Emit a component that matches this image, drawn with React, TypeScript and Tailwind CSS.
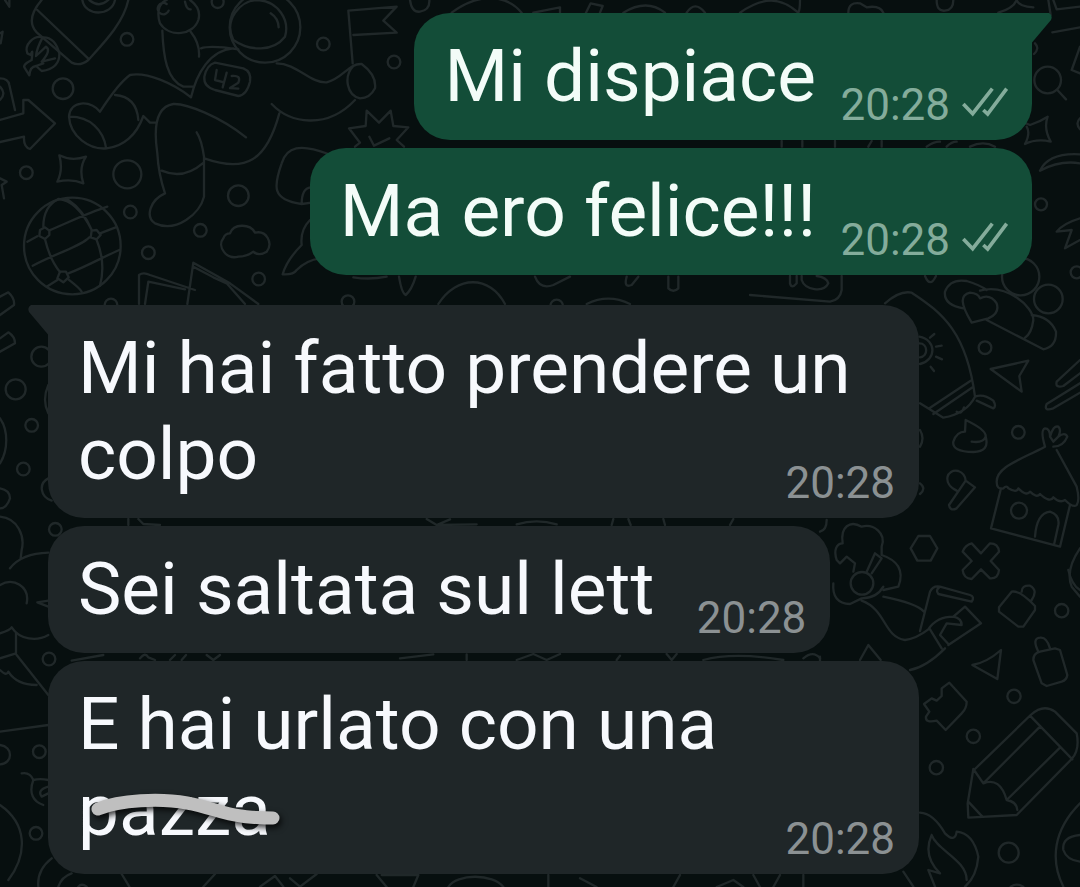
import type { ReactNode } from 'react';
import clsx from 'clsx';

type Message = {
  id: number;
  body: ReactNode;
  time: string;
  mine?: boolean;
  tail?: boolean;
};

const sent: Message[] = [
  { id: 1, body: 'Mi dispiace', time: '20:28', mine: true, tail: true },
  { id: 2, body: 'Ma ero felice!!!', time: '20:28', mine: true },
];

const received: Message[] = [
  { id: 3, body: 'Mi hai fatto prendere un colpo', time: '20:28', tail: true },
  { id: 4, body: 'Sei saltata sul lett', time: '20:28' },
  {
    id: 5,
    body: (
      <>
        E hai urlato con una <Scribbled>pazza</Scribbled>
      </>
    ),
    time: '20:28',
  },
];

export default function App() {
  return (
    <main className="relative min-h-screen overflow-hidden bg-[#070f0f] px-12 py-[13px] font-['Roboto',sans-serif]">
      <Wallpaper />
      <div className="relative flex flex-col gap-[30px]">
        <MessageGroup messages={sent} />
        <MessageGroup messages={received} />
      </div>
    </main>
  );
}

function MessageGroup({ messages }: { messages: Message[] }) {
  return (
    <section className="flex flex-col gap-2">
      {messages.map((m) => (
        <Bubble key={m.id} message={m} />
      ))}
    </section>
  );
}

function Bubble({ message }: { message: Message }) {
  const { body, time, mine, tail } = message;
  return (
    <article
      className={clsx(
        'relative grid max-w-[871px] rounded-[36px] pl-[30px] pr-6',
        mine ? 'self-end bg-[#134d38] text-[#f3fcf8]' : 'self-start bg-[#1f2628] text-[#f7f9fd]',
        tail && (mine ? 'rounded-tr-none' : 'rounded-tl-none'),
      )}
    >
      {tail && <Tail mine={mine} />}
      <p className="col-start-1 row-start-1 pt-5 pb-[21px] text-[73px] leading-[86px]">
        {body}
        {/* keeps the last line clear of the time */}
        <span aria-hidden="true" className={clsx('inline-block', mine ? 'w-[192px]' : 'w-[152px]')} />
      </p>
      <div
        className={clsx(
          'col-start-1 row-start-1 mb-[9px] flex items-center gap-3 self-end justify-self-end',
          mine ? 'text-[#84ac9b]' : 'text-[#8b9193]',
        )}
      >
        <time className="text-[44px] leading-[52px]">{time}</time>
        {mine && <Ticks />}
      </div>
    </article>
  );
}

function Tail({ mine }: { mine?: boolean }) {
  return (
    <svg
      aria-hidden="true"
      viewBox="0 0 20 32"
      className={clsx('absolute top-0 h-8 w-5', mine ? 'left-full fill-[#134d38]' : 'right-full -scale-x-100 fill-[#1f2628]')}
    >
      <path d="M-1 0H17Q21 2 19 7L0 29.500H-1Z" />
    </svg>
  );
}

function Ticks() {
  return (
    <svg
      role="img"
      aria-label="Delivered"
      viewBox="545 261 138 90"
      className="mb-1.5 h-[30px] w-[46px]"
      fill="none"
      stroke="currentColor"
      strokeWidth="11"
    >
      <path d="M549 312 577 341 636 266" />
      <path d="M609 330 622 342 679 266" />
    </svg>
  );
}

function Scribbled({ children }: { children: ReactNode }) {
  return (
    <span className="relative inline-block">
      {children}
      <svg
        aria-hidden="true"
        viewBox="0 0 210 86"
        className="absolute top-0 left-0 h-[86px] w-[210px] max-w-none drop-shadow-[2px_3px_3px_rgba(0,0,0,0.8)]"
        fill="none"
        stroke="#bfbfbf"
        strokeWidth="13"
        strokeLinecap="round"
      >
        <path d="M20 42C42 33 82 31 109 36C132 40 144 47 163 49Q176 51 195 51" />
      </svg>
    </span>
  );
}

function Wallpaper() {
  return (
    <svg
      aria-hidden="true"
      viewBox="0 0 3240 2661"
      preserveAspectRatio="xMinYMin slice"
      className="absolute inset-0 h-full w-full"
      fill="none"
      stroke="#202829"
      strokeWidth="7"
      strokeLinecap="round"
      strokeLinejoin="round"
    >
      {/* rocket */}
      <path d="M125 0C95 35 85 70 110 97L215 188Q240 200 265 180C310 130 370 70 385 0M112 30 265 176M247 0C255 50 335 50 345 0M268 0Q297 25 325 0" />
      <path d="M128 112C100 105 72 135 82 160L92 165Q100 140 95 180Q65 195 75 205L88 226Q90 200 108 198L125 213Q180 205 178 160Q165 110 128 112ZM128 112Q110 145 108 168L138 140Q155 150 125 185L165 175M108 198 130 190" />
      {/* astronaut */}
      <circle cx="795" cy="82" r="106" />
      <path d="M700 120C670 60 720 0 775 0C835 5 870 60 855 110C820 155 750 155 700 120ZM812 40Q835 55 836 82M570 0Q605 25 595 60C580 105 510 115 480 70C470 40 475 10 500 0M555 5Q560 30 572 28M500 12A17 17 0 1 0 506 32M487 92C490 170 500 240 550 260H580M572 95Q600 130 597 170M603 145Q630 135 715 148M700 145C630 150 590 220 573 292M573 292C520 250 440 215 390 225Q355 250 300 335C270 300 210 300 207 350C210 410 270 450 320 445C370 440 410 405 430 348L450 368H468M345 285Q410 290 415 360M210 350C270 350 310 390 318 443M738 412C660 350 560 310 520 312C470 320 460 380 472 460Q475 520 495 580C450 600 435 650 465 670C530 700 600 640 612 590V470Q605 420 590 397M485 512Q550 540 608 490M613 475C740 520 800 480 838 340M815 312C870 370 980 390 1065 300M830 190C890 190 930 250 980 247C1030 235 1045 190 1085 192Q1130 225 1125 265Q1110 295 1080 295C1040 285 1030 230 1060 198M1058 190 1045 32 1190 20 1150 62 1190 98 1060 105" />
      <path d="M645 188 730 205Q755 215 750 245Q740 285 715 288L645 270Q610 260 613 230Q620 195 645 188ZM650 210 645 240 672 247M680 218 668 262M695 228Q725 225 715 248L690 264 715 266" />
      {/* arrow, star, globe */}
      <path d="M0 360 70 340V300H85L165 370 90 447Q70 440 72 410L0 426M0 235Q25 235 28 255L45 330M0 260Q20 280 0 300M178 466Q215 485 258 470Q235 505 250 550Q215 535 172 545Q190 510 178 466ZM0 535 20 545 5 555 12 595M0 100 8 95 2 130M15 0 28 20V0" />
      <circle cx="217" cy="738" r="145" />
      <path d="M82 725 112 709M148 691C200 670 260 640 322 620M300 700 347 682M140 860 172 840M205 820C260 800 310 770 358 750M130 680Q130 620 175 597Q230 600 275 690M135 718Q150 780 180 816M290 720C310 770 310 820 300 857M205 838Q240 865 245 875M98 797C190 750 240 740 268 712M175 597 205 600Q250 630 275 690" />
      <path d="M120 690 135 682 148 692V705L135 717 118 708ZM275 692 290 690 302 705 290 718 272 712ZM180 815H198L206 832 190 847 172 835Z" />
      {/* cloud, paper, sofa */}
      <path d="M690 700C700 670 750 670 765 698C800 690 820 730 800 755Q775 770 760 755Q740 770 715 770C680 780 650 740 670 715Q675 700 690 700ZM417 912V825Q430 815 450 825L585 870M435 912 445 845 555 868M562 912 580 788 690 850 775 912M580 800 640 832 680 850 735 912M985 462C900 430 860 440 845 490C820 560 815 600 905 612L935 608M905 612Q905 565 932 562M930 660Q900 690 905 735Q860 780 848 823Q880 825 890 810Q920 780 960 775" />
      {/* sparkle burst */}
      <path d="M1065 440 1080 428 1047 385 1097 378 1100 332 1137 368 1172 332 1180 378 1225 382 1190 420 1212 440M1108 410 1122 437 1168 415" />
      <path d="M1230 0Q1235 38 1260 35Q1290 30 1288 0M1355 38C1440-25 1520-15 1565 38M1600 38 1680 22V38M1758 38 1772 10 1808 18 1800 38M1870 38Q1940-5 1995 38M2060 38Q2085 0 2115 38M2220 38C2290-10 2340-10 2395 38Q2400 30 2400 0" />

      {/* top right corner */}
      <g transform="translate(2340 0)">
        <path d="M205 38Q205 5 240 10L260 22Q300 15 310 38M470 0Q470 35 495 32Q520 30 520 0M655 38Q700 25 710 0Q715 20 760 22M805 0 812 45M820 0 830 28 900 20M817 97 900 82M900 140 875 210 900 220M765 130Q780 145 762 162" />
        <circle cx="803" cy="240" r="40" />
        <path d="M832 270 858 298M725 365 750 375Q780 365 803 350 790 385 812 425 770 415 735 432 752 400 740 380M780 512Q840 480 900 490M780 512C800 470 850 460 900 463M900 655Q850 670 830 695L875 690 855 745 900 720M900 355Q885 370 900 388" />
        <circle cx="783" cy="613" r="18" />
        <circle cx="890" cy="817" r="18" />
        <circle cx="722" cy="830" r="56" />
        <circle cx="805" cy="897" r="43" />
        <path d="M5 423V440M67 423V440M165 423V440M265 440 275 423M305 423V440M440 440Q460 425 480 425M500 440Q515 425 530 425M570 440Q610 420 645 440M30 828V850Q35 868 50 850V828M65 828V840C75 870 130 880 145 850Q140 832 110 828M185 828V870Q180 900 150 905L-90 885M435 828Q450 865 468 828" />
      </g>

      {/* hot air balloon to hut */}
      <g transform="translate(2460 810)">
        <path d="M195 100Q240 60 275 68C370 130 440 190 465 380Q440 430 370 443L300 400M328 415 452 332M340 432 460 350M465 380Q490 370 520 392Q530 410 520 415L470 392M410 425Q425 435 432 412M330 203 343 192M348 230 365 227M348 260 366 268M332 290 342 303M298 220C325 220 325 260 300 262M298 200C350 210 350 270 300 282" />
        <path d="M430 115Q370 105 375 65Q390 25 440 33 480 45 500 60M480 62C560 40 640 110 640 150Q635 190 615 203M500 150 670 238Q710 230 708 185Q690 140 635 135M455 158C420 100 420 75 450 68Q475 70 480 85Q510 70 530 100Q540 130 505 145Z" />
        <path d="M512 297 625 272 598 318 605 365ZM780 270 710 335Q705 355 730 348L780 310M780 340 680 402Q670 425 700 415L780 368M437 450Q500 480 497 500 510 545 460 546 395 545 400 515 410 485 435 485ZM497 500Q490 520 455 515M410 662C365 640 380 595 415 603Q435 610 437 632L465 652 410 715Q390 725 387 705L437 632" />
        <path d="M675 530C600 570 530 590 530 635Q530 660 550 655Q560 645 565 655Q590 670 595 655Q620 680 630 665Q650 685 660 672Q690 700 700 682Q720 700 735 690Q760 715 770 705Q780 690 770 650L710 540M675 530Q660 480 675 475 690 475 690 500 700 465 715 470 725 480 715 500 735 485 742 500Q730 530 700 530M690 500 700 515 715 500M543 655 513 775 720 830 750 705M645 800Q650 730 690 725Q720 735 715 765L703 820" />
        <circle cx="597" cy="722" r="24" />
        <path d="M295 798H330L352 835 332 872H292L272 835ZM455 820 483 850 510 820Q535 820 537 845L512 873 537 900Q535 927 510 925L483 898 455 927Q430 925 428 900L455 873 428 845Q435 825 455 820ZM780 835Q735 900 755 950L780 980M300 480Q315 505 300 530M300 640Q320 655 300 672M20 750Q20 780 0 785" />
        <path d="M50 870C40 840 50 820 68 820C60 770 90 750 125 770C160 760 200 790 185 830V855C230 870 255 900 235 950L190 960M50 870 60 880 80 860 105 880 100 905M140 905 165 850 185 865 155 910" />
        <circle cx="126" cy="940" r="34" />
      </g>

      {/* hand with card, pencil, flame */}
      <g transform="translate(2460 1710)">
        <path d="M40 40Q35 100 90 102L125 85Q170 85 190 50M125 92C200 120 190 200 255 210Q290 205 325 178 350 140 400 140 425 145 425 165L380 160 360 195 385 222M190 80Q290 100 312 125M300 183 330 65Q340 45 360 50L450 75Q465 80 455 95L355 72Q345 60 360 50M330 178 365 235M400 140 435 110 483 160 385 225M270 300Q320 290 375 235M120 270 145 225 182 270M0 260V275" />
        <path d="M575 65Q600 60 645 108V120L610 170H595L537 125V112ZM605 65Q605 45 630 47Q655 60 635 90M660 245 705 235 720 240 742 315Q740 330 725 335L680 348 665 340 640 270Q640 250 660 245ZM655 245Q635 205 660 203 680 200 690 235M457 285Q500 278 543 240L532 327ZM365 378V355L388 338 440 395Q440 415 425 430L377 480 350 452Q315 460 318 440L328 425 312 402 335 385 350 392Z" />
        <path d="M465 597 632 435Q670 400 705 425L770 490Q780 540 755 567L590 735 445 743 443 700 460 597 490 640 660 470M630 437 757 568M490 640Q540 620 560 690L720 533M560 690Q590 695 592 720M447 697 487 740" />
        <path d="M300 728Q340 730 375 790 405 820 410 785 460 790 475 860 470 920 435 950M335 795C350 840 440 870 440 930M335 795C310 850 340 890 360 910L325 900 345 950M250 905 280 950M780 700C700 780 690 870 730 950M780 795Q725 800 730 840 740 870 780 875M572 950Q590 938 610 950" />
        <circle cx="725" cy="122" r="20" />
        <circle cx="582" cy="379" r="20" />
        <circle cx="460" cy="499" r="20" />
        <circle cx="349" cy="593" r="20" />
        <circle cx="566" cy="848" r="30" />
        <path d="M745 0Q755 45 780 60" />
      </g>

      {/* left edge */}
      <g transform="translate(0 810)">
        <path d="M0 80 25 67Q45 85 42 105L0 135M0 205 25 187Q45 200 45 220L0 245M145 345Q125 390 145 430M0 445C25 480 25 540 0 580M0 655Q30 660 30 685 20 715 0 715M145 625C115 640 120 680 155 692M0 740C55 745 75 800 65 840L62 865M30 895Q65 850 145 848" />
        <circle cx="124" cy="260" r="30" />
        <circle cx="47" cy="358" r="30" />
      </g>
      <g transform="translate(0 1710)">
        <path d="M0 45C40 20 90 50 80 100M145 92 112 97 145 110M0 190Q30 180 35 172C60 210 110 215 145 195M48 190V250L0 265M50 255 145 375M0 300Q20 320 25 305 50 345 110 345M0 485 145 465M0 525C40 530 40 580 0 583M65 610Q90 605 100 630Q120 625 145 630M100 630C85 670 100 695 130 705M145 650Q110 660 125 680L145 670M0 705C80 760 85 850 25 930M155 865Q110 900 115 950M215 910Q185 920 175 950M365 912 388 950M235 950Q245 938 260 950M610 950 645 912M780 950 825 918 850 950M870 925 900 950 950 912M215 272 310 255M420 265Q435 245 445 262L465 270M510 270 525 255M545 270 558 255M620 255 640 270 660 255" />
      </g>

      {/* slivers between bubbles */}
      <path d="M1060 832Q1110 840 1160 830M1197 830Q1205 880 1217 885 1235 870 1247 830M1315 912C1370 825 1470 825 1515 912M1605 830Q1620 870 1660 855L1710 830M1880 830Q1870 865 1895 855L1915 830M2005 830V865Q2020 880 2035 865V830M1760 912Q1825 880 1890 912M385 1557V1575M415 1557 430 1572 480 1575M1280 1557 1310 1575 1350 1558M1310 1575 1430 1573M1550 1573Q1610 1555 1670 1573M1840 1557 1835 1575M1885 1557 1892 1575M1990 1557 1995 1575M2190 1575 2200 1557M1200 1975 1300 1963M1400 1963V1980M1550 1980 1600 1962 1640 1980 1680 1962M1850 1980 1860 1967M2000 1962 2015 1980 2030 1962M2110 1980Q2200 1955 2350 1980M2410 1975Q2440 1950 2460 1975" />
      <path d="M1130 2625 1160 2661M1145 2625H1255L1240 2661M1345 2661C1370 2620 1480 2620 1510 2661M1645 2625V2661M1740 2635 1790 2661M2040 2625 2020 2661M2150 2661 2200 2640 2230 2661M2260 2625 2280 2661M2340 2625 2320 2661M2410 2625V2661" />

      {/* bubbles and planets */}
      <circle cx="381" cy="118" r="19" />
      <circle cx="653" cy="6" r="18" />
      <circle cx="189" cy="266" r="31" />
      <circle cx="79" cy="518" r="19" />
      <circle cx="382" cy="523" r="42" />
      <circle cx="391" cy="636" r="19" />
      <circle cx="715" cy="587" r="31" />
      <circle cx="601" cy="691" r="19" />
      <circle cx="445" cy="758" r="19" />
      <circle cx="776" cy="837" r="19" />
      <circle cx="333" cy="915" r="19" />
      <circle cx="970" cy="132" r="19" />
      <circle cx="1182" cy="186" r="19" />
      <circle cx="1044" cy="905" r="19" />
      <circle cx="1670" cy="918" r="19" />
      <circle cx="2955" cy="1043" r="19" />
      <circle cx="3055" cy="1297" r="19" />
      <circle cx="95" cy="1276" r="19" />
      <circle cx="70" cy="1407" r="19" />
      <circle cx="166" cy="1588" r="19" />
      <circle cx="147" cy="1977" r="19" />
      <circle cx="118" cy="2255" r="19" />
      <circle cx="108" cy="2500" r="19" />
    </svg>
  );
}
